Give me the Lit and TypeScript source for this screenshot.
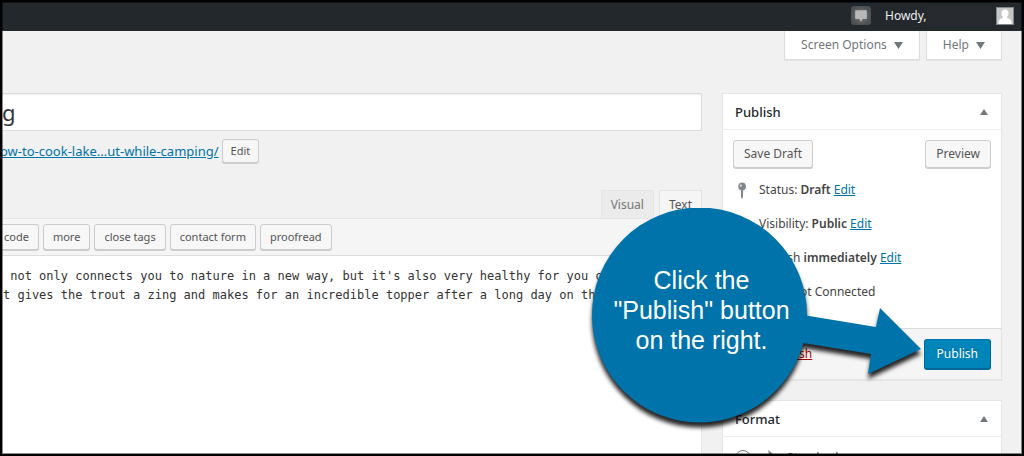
import { LitElement, html, css, svg } from "lit";
import { customElement, property } from "lit/decorators.js";

const controls = css`
  * {
    box-sizing: border-box;
  }
  button {
    font: inherit;
    margin: 0;
    cursor: pointer;
  }
  .button {
    height: 28px;
    padding: 0 10px;
    color: #555;
    background: #f7f7f7;
    border: 1px solid #ccc;
    border-radius: 3px;
    box-shadow: 0 1px 0 #ccc;
    white-space: nowrap;
  }
  .small {
    height: 24px;
    padding: 0 8px;
    font-size: 11px;
  }
  .tool {
    height: 26px;
    padding: 0 9px;
    font-size: 11px;
  }
  .primary {
    height: 30px;
    padding: 0 12px;
    color: #fff;
    background: #0085ba;
    border-color: #0073aa #006799 #006799;
    box-shadow: 0 1px 0 #006799;
    text-shadow: 0 -1px 1px #006799;
  }
  a {
    color: #0073aa;
  }
`;

@customElement("admin-bar")
export class AdminBar extends LitElement {
  static styles = css`
    :host {
      display: flex;
      align-items: center;
      justify-content: flex-end;
      height: 31px;
      padding-right: 10px;
      background: #23282d;
      color: #eee;
    }
    .comments {
      display: grid;
      place-items: center;
      width: 20px;
      height: 19px;
      margin-right: 14px;
      border-radius: 3px;
      background: radial-gradient(#777, #4c4f51 75%);
    }
    .account {
      display: flex;
      align-items: center;
      width: 129px;
    }
    .name {
      flex: 1;
      height: 20px;
      margin-right: 4px;
      background: #272b2f;
    }
    .avatar {
      display: block;
    }
  `;

  render() {
    return html`
      <span class="comments">
        <svg width="14" height="14" viewBox="0 0 12 12" aria-hidden="true">
          <path d="M1.500 1h9q.5 0 .5.5v6.500q0 .5-.5.5H7.500L6 11 4.500 8.500h-3Q1 8.500 1 8V1.500Q1 1 1.500 1z" fill="#b8b8b8" />
        </svg>
      </span>
      <span class="account">
        <span>Howdy,</span>
        <span class="name"></span>
        <svg class="avatar" width="18" height="18" viewBox="0 0 18 18" aria-hidden="true">
          <path d="M0 0h18v18H0z" fill="#82878c" />
          <path d="M1 1h16v16H1z" fill="#c5c5c5" />
          <path d="M9 2.500c2.200 0 3.600 1.600 3.600 3.800 0 1.500-.6 2.700-1.500 3.500v1.200c2.500.6 4.200 1.600 4.400 4.200V17h-13v-1.800c.2-2.600 1.900-3.600 4.400-4.200V9.800C6 9 5.400 7.800 5.400 6.300 5.400 4.100 6.800 2.500 9 2.500z" fill="#fff" />
        </svg>
      </span>
    `;
  }
}

@customElement("meta-box")
export class MetaBox extends LitElement {
  @property() heading = "";

  static styles = [
    controls,
    css`
      :host {
        display: block;
        background: #fff;
        border: 1px solid #e5e5e5;
        box-shadow: 0 1px 1px rgba(0, 0, 0, 0.04);
      }
      .head {
        display: flex;
        align-items: center;
        justify-content: space-between;
        height: 36px;
        padding: 0 12px;
        border-bottom: 1px solid #eee;
      }
      h2 {
        margin: 0;
        font-size: 13px;
        font-weight: 500;
        color: #23282d;
      }
      .toggle {
        display: grid;
        padding: 0 1px;
        border: 0;
        background: none;
      }
    `,
  ];

  render() {
    return html`
      <div class="head">
        <h2>${this.heading}</h2>
        <button class="toggle" aria-label="Toggle panel">
          <svg width="8" height="6" viewBox="0 0 8 6"><path d="M4 0l4 6H0z" fill="#72777c" /></svg>
        </button>
      </div>
      <slot></slot>
    `;
  }
}

@customElement("post-editor")
export class PostEditor extends LitElement {
  private tools = ["code", "more", "close tags", "contact form", "proofread"];
  private body =
    " not only connects you to nature in a new way, but it's also very healthy for you overall.\n" +
    "t gives the trout a zing and makes for an incredible topper after a long day on the water.";

  static styles = [
    controls,
    css`
      :host {
        display: flex;
        flex-direction: column;
        min-width: 0;
      }
      .title {
        width: 100%;
        height: 38px;
        padding: 0 2px;
        font: 22px "Noto Sans", sans-serif;
        color: #32373c;
        background: #fff;
        border: 1px solid #ddd;
        border-left: 0;
        box-shadow: inset 0 1px 2px rgba(0, 0, 0, 0.07);
      }
      .permalink {
        display: flex;
        align-items: center;
        gap: 3px;
        height: 24px;
        margin-top: 8px;
      }
      .permalink a {
        font-size: 13px;
      }
      .tabs {
        display: flex;
        justify-content: flex-end;
        gap: 5px;
        margin-top: 27px;
      }
      .tab {
        height: 28px;
        padding: 0 9px;
        color: #777;
        background: #ebebeb;
        border: 1px solid #e5e5e5;
        border-bottom: 0;
      }
      .current {
        color: #555;
        background: #f5f5f5;
      }
      .pane {
        display: flex;
        flex: 1;
        flex-direction: column;
        border: 1px solid #e5e5e5;
        border-left: 0;
      }
      .tools {
        display: flex;
        gap: 4px;
        height: 37px;
        padding: 5px 0;
        background: #f5f5f5;
        border-bottom: 1px solid #ddd;
      }
      .tool:first-child {
        border-left: 0;
        border-radius: 0 3px 3px 0;
        padding-left: 4px;
      }
      textarea {
        flex: 1;
        width: 100%;
        padding: 11px 3px;
        border: 0;
        resize: none;
        overflow: hidden;
        white-space: pre;
        color: #333;
        background: #fff;
        font: 12px/19px "DejaVu Sans Mono", monospace;
      }
    `,
  ];

  render() {
    return html`
      <input class="title" aria-label="Title" .value=${"g"} />
      <div class="permalink">
        <a href="#permalink">ow-to-cook-lake...ut-while-camping/</a>
        <button class="button small">Edit</button>
      </div>
      <div class="tabs">
        <button class="tab">Visual</button>
        <button class="tab current">Text</button>
      </div>
      <div class="pane">
        <div class="tools">
          ${this.tools.map((t) => html`<button class="button tool">${t}</button>`)}
        </div>
        <textarea aria-label="Content" spellcheck="false" .value=${this.body}></textarea>
      </div>
    `;
  }
}

@customElement("callout-arrow")
export class CalloutArrow extends LitElement {
  static styles = css`
    :host {
      display: block;
      width: 340px;
      height: 240px;
    }
    svg {
      display: block;
      filter: drop-shadow(0 5px 2px rgba(0, 0, 0, 0.85));
    }
    .message {
      position: absolute;
      top: 57px;
      left: 0;
      width: 219px;
      margin: 0;
      text-align: center;
      color: #fff;
      font: 25px/30px "Liberation Sans", Arial, sans-serif;
    }
  `;

  render() {
    return html`
      <svg width="340" height="240" viewBox="0 0 340 240" aria-hidden="true">
        ${svg`
          <circle cx="107.500" cy="107" r="107.500" fill="#0073aa" />
          <path d="M205 106L284 119 288 100 329 141 276 166 279 146 205 134z" fill="#0073aa" />
        `}
      </svg>
      <p class="message">Click the<br />"Publish" button<br />on the right.</p>
    `;
  }
}

@customElement("app-root")
export class AppRoot extends LitElement {
  static styles = [
    controls,
    css`
      :host {
        display: flex;
        flex-direction: column;
        position: relative;
        height: 100vh;
        overflow: hidden;
        background: #f1f1f1;
        color: #444;
        font: 12px/18px "Noto Sans", sans-serif;
      }
      .frame {
        position: absolute;
        inset: 0;
        border: 2px solid #000;
        box-shadow: inset 0 0 0 1px rgba(0, 0, 0, 0.45);
        pointer-events: none;
      }
      .screen-meta {
        display: flex;
        justify-content: flex-end;
        gap: 6px;
        padding-right: 22px;
      }
      .meta-link {
        display: flex;
        align-items: center;
        gap: 7px;
        height: 29px;
        padding: 0 16px;
        color: #72777c;
        background: #fff;
        border: 1px solid #ddd;
        border-top: 0;
        box-shadow: 0 1px 0 rgba(0, 0, 0, 0.05);
      }
      .columns {
        display: grid;
        grid-template-columns: minmax(0, 1fr) 280px;
        gap: 20px;
        flex: 1;
        min-height: 0;
        margin-top: 33px;
        padding-right: 22px;
      }
      .side {
        display: flex;
        flex-direction: column;
        gap: 20px;
      }
      .actions {
        display: flex;
        justify-content: space-between;
        padding: 10px 10px 0;
      }
      .rows {
        display: grid;
        gap: 16px;
        margin: 0;
        padding: 13px 10px 27px;
        list-style: none;
      }
      .rows li {
        display: flex;
        align-items: center;
        gap: 8px;
      }
      .rows .plain {
        padding-left: 2px;
      }
      .rows svg {
        flex: none;
      }
      b {
        font-weight: 600;
      }
      .major {
        display: flex;
        align-items: center;
        justify-content: space-between;
        padding: 10px;
        background: #f5f5f5;
        border-top: 1px solid #ddd;
      }
      .trash {
        color: #a00;
      }
      .format {
        display: flex;
        align-items: center;
        gap: 8px;
        padding: 12px;
      }
      .format input {
        width: 16px;
        height: 16px;
        margin: 0 4px 0 0;
      }
      .format svg {
        margin-right: -2px;
      }
      .callout {
        position: absolute;
        top: 208px;
        right: 92px;
      }
    `,
  ];

  private arrow() {
    return html`<svg width="9" height="7" viewBox="0 0 9 7" aria-hidden="true"><path d="M0 0h9L4.500 7z" fill="#72777c" /></svg>`;
  }

  private icon(shape: unknown) {
    return html`<svg width="18" height="18" viewBox="0 0 18 18" fill="#82878c" aria-hidden="true">${shape}</svg>`;
  }

  render() {
    return html`
      <admin-bar></admin-bar>
      <div class="screen-meta">
        <button class="meta-link">Screen Options ${this.arrow()}</button>
        <button class="meta-link">Help ${this.arrow()}</button>
      </div>
      <div class="columns">
        <post-editor></post-editor>
        <div class="side">
          <meta-box heading="Publish">
            <div class="actions">
              <button class="button">Save Draft</button>
              <button class="button">Preview</button>
            </div>
            <ul class="rows">
              <li>
                ${this.icon(svg`<path d="M9 1.500a4 4 0 0 1 1.200 7.800L10 16l-1 2-1-2V9.300A4 4 0 0 1 9 1.500z" /><circle cx="7.800" cy="4.600" r="1.300" fill="#c8cacc" />`)}
                <span>Status: <b>Draft</b> <a href="#status">Edit</a></span>
              </li>
              <li>
                ${this.icon(svg`<path d="M1 9q8-8 16 0-8 8-16 0z" />`)}
                <span>Visibility: <b>Public</b> <a href="#visibility">Edit</a></span>
              </li>
              <li>
                ${this.icon(svg`<path d="M2 3h14v13H2z" />`)}
                <span>Publish <b>immediately</b> <a href="#date">Edit</a></span>
              </li>
              <li class="plain">Publicize: Not Connected</li>
            </ul>
            <div class="major">
              <a class="trash" href="#trash">Move to Trash</a>
              <button class="button primary">Publish</button>
            </div>
          </meta-box>
          <meta-box heading="Format">
            <label class="format">
              <input type="radio" name="format" />
              <svg width="18" height="18" viewBox="0 0 18 18" fill="#82878c" aria-hidden="true"><path d="M5 1l8 6-2 5-4-3z" /></svg>
              Standard
            </label>
          </meta-box>
        </div>
      </div>
      <callout-arrow class="callout"></callout-arrow>
      <div class="frame"></div>
    `;
  }
}
